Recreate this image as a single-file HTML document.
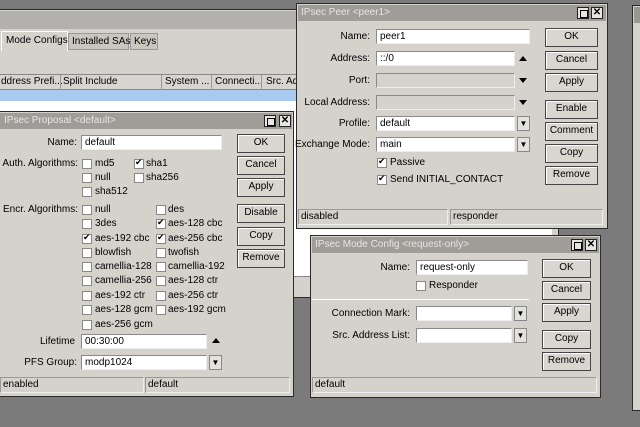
<!DOCTYPE html>
<html><head><meta charset="utf-8"><style>
*{box-sizing:border-box;margin:0;padding:0}
body{width:640px;height:427px;background:#7b7b7b;position:relative;overflow:hidden;font-family:"Liberation Sans",sans-serif;font-size:10px;color:#000}
.a{position:absolute}
.win{position:absolute;background:#d5d2cc;border:1px solid #2a2a2a}
.tb{position:absolute;left:1px;right:1px;top:1px;height:16px;background:#a09d98;color:#e6e6e6;padding-left:3px;line-height:16px;font-size:10px;white-space:nowrap}
.ic{position:absolute;width:12px;height:12px;border:1px solid #222;background:#e8e6e2;top:3px}
.ic.m::after{content:"";position:absolute;left:2px;top:2px;width:6px;height:6px;border:1px solid #000}
.ic.x{font-weight:bold;font-size:10px;line-height:10px;text-align:center}
.lbl{position:absolute;text-align:right;white-space:nowrap}
.in{position:absolute;background:#fff;border:1px solid #8a8a8a;border-right-color:#eee;border-bottom-color:#eee;padding-left:3px;line-height:13px;white-space:nowrap}
.in.d{background:#d5d2cc}
.btn{position:absolute;border:1px solid #444;background:#d9d6d0;box-shadow:inset 1px 1px #fff;text-align:center;line-height:16px}
.cb{position:absolute;width:10px;height:10px;background:#fff;border:1px solid #888}
.cb.c::after{content:"✔";position:absolute;left:0;top:-3px;font-size:9px}
.t{position:absolute;white-space:nowrap}
.dd{position:absolute;width:13px;height:15px;border:1px solid #888;background:#e4e2de;font-size:8px;text-align:center;line-height:13px}
.st{position:absolute;height:16px;border:1px solid #999;border-right-color:#eee;border-bottom-color:#eee;padding-left:2px;line-height:14px}
.arr{position:absolute;width:0;height:0;border-left:4px solid transparent;border-right:4px solid transparent}
</style></head><body>

<div class="win" style="left:632px;top:5px;width:12px;height:406px"><div class="tb" style="background:#9a9792"></div></div>

<div class="win" style="left:-2px;top:9px;width:561px;height:289px;background:#d5d2cc">
 <div class="a" style="left:1px;top:1px;right:1px;height:18px;background:#b3b1ad"></div>
 <div class="a" style="left:2px;top:21px;width:67px;height:20px;background:#d5d2cc;border:1px solid #fff;border-bottom:none;padding:3px 4px;white-space:nowrap">Mode Configs</div>
 <div class="a" style="left:69px;top:23px;width:61px;height:17px;background:#c9c6c0;border:1px solid #999;padding:2px 3px;white-space:nowrap">Installed SAs</div>
 <div class="a" style="left:131px;top:23px;width:28px;height:17px;background:#c9c6c0;border:1px solid #999;padding:2px 3px">Keys</div>
 <div class="a" style="left:1px;top:64px;right:1px;height:16px;background:#d8d5d0;border-top:1px solid #888;border-bottom:1px solid #888"></div>
 <div class="t" style="left:2px;top:66px">ddress Prefi...</div>
 <div class="t" style="left:64px;top:66px">Split Include</div>
 <div class="t" style="left:166px;top:66px">System ...</div>
 <div class="t" style="left:216px;top:66px">Connecti...</div>
 <div class="t" style="left:267px;top:66px">Src. Add</div>
 <div class="a" style="left:61px;top:65px;width:1px;height:15px;background:#999"></div>
 <div class="a" style="left:162px;top:65px;width:1px;height:15px;background:#999"></div>
 <div class="a" style="left:212px;top:65px;width:1px;height:15px;background:#999"></div>
 <div class="a" style="left:262px;top:65px;width:1px;height:15px;background:#999"></div>
 <div class="a" style="left:1px;top:80px;right:1px;height:11px;background:#a9c9ee"></div>
 <div class="a" style="left:1px;top:91px;right:6px;height:175px;background:#fff"></div>
 <div class="a" style="left:1px;top:266px;right:1px;height:20px;background:#d5d2cc;border-top:1px solid #888"></div>
</div>

<div class="win" style="left:-2px;top:111px;width:296px;height:286px">
 <div class="tb" style="padding-left:4px">IPsec Proposal &lt;default&gt;</div>
 <div class="ic m" style="left:265px"></div><div class="ic x" style="left:280px">✕</div>
</div>
<div class="lbl" style="left:0;width:77px;top:137px">Name:</div>
<div class="in" style="left:81px;top:135px;width:141px;height:15px">default</div>
<div class="btn" style="left:237px;top:134px;width:48px;height:19px">OK</div>
<div class="btn" style="left:237px;top:156px;width:48px;height:19px">Cancel</div>
<div class="btn" style="left:237px;top:178px;width:48px;height:19px">Apply</div>
<div class="btn" style="left:237px;top:204px;width:48px;height:19px">Disable</div>
<div class="btn" style="left:237px;top:227px;width:48px;height:19px">Copy</div>
<div class="btn" style="left:237px;top:249px;width:48px;height:19px">Remove</div>
<div class="lbl" style="left:0;width:78px;top:158px">Auth. Algorithms:</div>
<div class="cb" style="left:82px;top:159px"></div><div class="t" style="left:95px;top:158px">md5</div>
<div class="cb c" style="left:134px;top:159px"></div><div class="t" style="left:146px;top:158px">sha1</div>
<div class="cb" style="left:82px;top:173px"></div><div class="t" style="left:95px;top:172px">null</div>
<div class="cb" style="left:134px;top:173px"></div><div class="t" style="left:146px;top:172px">sha256</div>
<div class="cb" style="left:82px;top:187px"></div><div class="t" style="left:95px;top:186px">sha512</div>
<div class="lbl" style="left:0;width:78px;top:204px">Encr. Algorithms:</div>
<div class="cb" style="left:82px;top:205px"></div><div class="t" style="left:95px;top:204px">null</div>
<div class="cb" style="left:156px;top:205px"></div><div class="t" style="left:168px;top:204px">des</div>
<div class="cb" style="left:82px;top:219px"></div><div class="t" style="left:95px;top:218px">3des</div>
<div class="cb c" style="left:156px;top:219px"></div><div class="t" style="left:168px;top:218px">aes-128 cbc</div>
<div class="cb c" style="left:82px;top:234px"></div><div class="t" style="left:95px;top:233px">aes-192 cbc</div>
<div class="cb c" style="left:156px;top:234px"></div><div class="t" style="left:168px;top:233px">aes-256 cbc</div>
<div class="cb" style="left:82px;top:248px"></div><div class="t" style="left:95px;top:247px">blowfish</div>
<div class="cb" style="left:156px;top:248px"></div><div class="t" style="left:168px;top:247px">twofish</div>
<div class="cb" style="left:82px;top:262px"></div><div class="t" style="left:95px;top:261px">camellia-128</div>
<div class="cb" style="left:156px;top:262px"></div><div class="t" style="left:168px;top:261px">camellia-192</div>
<div class="cb" style="left:82px;top:276px"></div><div class="t" style="left:95px;top:275px">camellia-256</div>
<div class="cb" style="left:156px;top:276px"></div><div class="t" style="left:168px;top:275px">aes-128 ctr</div>
<div class="cb" style="left:82px;top:291px"></div><div class="t" style="left:95px;top:290px">aes-192 ctr</div>
<div class="cb" style="left:156px;top:291px"></div><div class="t" style="left:168px;top:290px">aes-256 ctr</div>
<div class="cb" style="left:82px;top:305px"></div><div class="t" style="left:95px;top:304px">aes-128 gcm</div>
<div class="cb" style="left:156px;top:305px"></div><div class="t" style="left:168px;top:304px">aes-192 gcm</div>
<div class="cb" style="left:82px;top:320px"></div><div class="t" style="left:95px;top:319px">aes-256 gcm</div>
<div class="lbl" style="left:0;width:75px;top:336px">Lifetime</div>
<div class="in" style="left:81px;top:334px;width:126px;height:15px">00:30:00</div>
<div class="arr" style="left:212px;top:338px;border-bottom:5px solid #000"></div>
<div class="lbl" style="left:0;width:77px;top:357px">PFS Group:</div>
<div class="in" style="left:81px;top:355px;width:126px;height:15px">modp1024</div>
<div class="dd" style="left:209px;top:355px">▼</div>
<div class="st" style="left:0;top:377px;width:144px">enabled</div>
<div class="st" style="left:145px;top:377px;width:145px">default</div>

<div class="win" style="left:296px;top:3px;width:312px;height:226px">
 <div class="tb">IPsec Peer &lt;peer1&gt;</div>
 <div class="ic m" style="left:280px"></div><div class="ic x" style="left:294px">✕</div>
</div>
<div class="lbl" style="left:290px;width:80px;top:31px">Name:</div>
<div class="in" style="left:376px;top:29px;width:154px;height:15px">peer1</div>
<div class="lbl" style="left:290px;width:80px;top:53px">Address:</div>
<div class="in" style="left:376px;top:51px;width:139px;height:15px">::/0</div>
<div class="arr" style="left:519px;top:56px;border-bottom:5px solid #000"></div>
<div class="lbl" style="left:290px;width:80px;top:75px">Port:</div>
<div class="in d" style="left:376px;top:73px;width:139px;height:15px"></div>
<div class="arr" style="left:519px;top:78px;border-top:5px solid #000"></div>
<div class="lbl" style="left:290px;width:80px;top:97px">Local Address:</div>
<div class="in d" style="left:376px;top:95px;width:139px;height:15px"></div>
<div class="arr" style="left:519px;top:100px;border-top:5px solid #000"></div>
<div class="lbl" style="left:290px;width:80px;top:118px">Profile:</div>
<div class="in" style="left:376px;top:116px;width:139px;height:15px">default</div>
<div class="dd" style="left:517px;top:116px">▼</div>
<div class="lbl" style="left:290px;width:80px;top:139px">Exchange Mode:</div>
<div class="in" style="left:376px;top:137px;width:139px;height:15px">main</div>
<div class="dd" style="left:517px;top:137px">▼</div>
<div class="cb c" style="left:377px;top:158px"></div><div class="t" style="left:390px;top:157px">Passive</div>
<div class="cb c" style="left:377px;top:175px"></div><div class="t" style="left:390px;top:174px">Send INITIAL_CONTACT</div>
<div class="btn" style="left:545px;top:28px;width:53px;height:19px">OK</div>
<div class="btn" style="left:545px;top:51px;width:53px;height:19px">Cancel</div>
<div class="btn" style="left:545px;top:73px;width:53px;height:19px">Apply</div>
<div class="btn" style="left:545px;top:100px;width:53px;height:19px">Enable</div>
<div class="btn" style="left:545px;top:122px;width:53px;height:19px">Comment</div>
<div class="btn" style="left:545px;top:144px;width:53px;height:19px">Copy</div>
<div class="btn" style="left:545px;top:166px;width:53px;height:19px">Remove</div>
<div class="st" style="left:298px;top:209px;width:150px">disabled</div>
<div class="st" style="left:450px;top:209px;width:153px">responder</div>

<div class="win" style="left:310px;top:235px;width:291px;height:163px">
 <div class="tb">IPsec Mode Config &lt;request-only&gt;</div>
 <div class="ic m" style="left:260px"></div><div class="ic x" style="left:274px">✕</div>
</div>
<div class="lbl" style="left:320px;width:90px;top:262px">Name:</div>
<div class="in" style="left:416px;top:260px;width:112px;height:15px">request-only</div>
<div class="cb" style="left:416px;top:281px"></div><div class="t" style="left:429px;top:280px">Responder</div>
<div class="a" style="left:312px;top:299px;width:217px;height:1px;background:#999;border-bottom:1px solid #fff"></div>
<div class="lbl" style="left:320px;width:90px;top:308px">Connection Mark:</div>
<div class="in" style="left:416px;top:306px;width:96px;height:15px"></div>
<div class="dd" style="left:514px;top:306px">▼</div>
<div class="lbl" style="left:320px;width:90px;top:330px">Src. Address List:</div>
<div class="in" style="left:416px;top:328px;width:96px;height:15px"></div>
<div class="dd" style="left:514px;top:328px">▼</div>
<div class="btn" style="left:542px;top:259px;width:49px;height:19px">OK</div>
<div class="btn" style="left:542px;top:281px;width:49px;height:19px">Cancel</div>
<div class="btn" style="left:542px;top:303px;width:49px;height:19px">Apply</div>
<div class="btn" style="left:542px;top:330px;width:49px;height:19px">Copy</div>
<div class="btn" style="left:542px;top:352px;width:49px;height:19px">Remove</div>
<div class="st" style="left:312px;top:377px;width:285px">default</div>

</body></html>
